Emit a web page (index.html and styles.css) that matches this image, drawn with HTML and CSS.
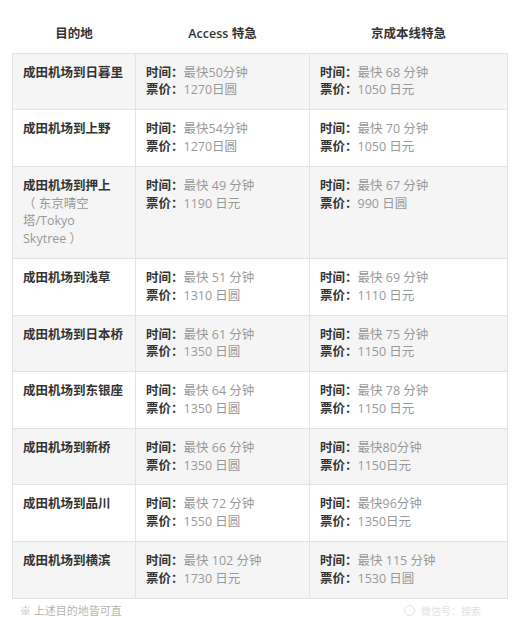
FILE: index.html
```html
<!DOCTYPE html>
<html lang="zh-CN">
<head>
<meta charset="utf-8">
<title>成田机场交通</title>
<link rel="stylesheet" href="styles.css">
</head>
<body>
<div class="page">
  <table class="fares">
    <colgroup>
      <col class="c1"><col class="c2"><col class="c3">
    </colgroup>
    <thead>
      <tr><th>目的地</th><th>Access 特急</th><th>京成本线特急</th></tr>
    </thead>
    <tbody>
      <tr>
        <td class="dest">成田机场到日暮里</td>
        <td><b>时间：</b><span class="v">最快50分钟</span><br><b>票价：</b><span class="v">1270日圆</span></td>
        <td><b>时间：</b><span class="v">最快 68 分钟</span><br><b>票价：</b><span class="v">1050 日元</span></td>
      </tr>
      <tr>
        <td class="dest">成田机场到上野</td>
        <td><b>时间：</b><span class="v">最快54分钟</span><br><b>票价：</b><span class="v">1270日圆</span></td>
        <td><b>时间：</b><span class="v">最快 70 分钟</span><br><b>票价：</b><span class="v">1050 日元</span></td>
      </tr>
      <tr>
        <td class="dest">成田机场到押上<br><span class="note">（ 东京晴空塔/Tokyo<br>Skytree ）</span></td>
        <td><b>时间：</b><span class="v">最快 49 分钟</span><br><b>票价：</b><span class="v">1190 日元</span></td>
        <td><b>时间：</b><span class="v">最快 67 分钟</span><br><b>票价：</b><span class="v">990 日圆</span></td>
      </tr>
      <tr>
        <td class="dest">成田机场到浅草</td>
        <td><b>时间：</b><span class="v">最快 51 分钟</span><br><b>票价：</b><span class="v">1310 日圆</span></td>
        <td><b>时间：</b><span class="v">最快 69 分钟</span><br><b>票价：</b><span class="v">1110 日元</span></td>
      </tr>
      <tr>
        <td class="dest">成田机场到日本桥</td>
        <td><b>时间：</b><span class="v">最快 61 分钟</span><br><b>票价：</b><span class="v">1350 日圆</span></td>
        <td><b>时间：</b><span class="v">最快 75 分钟</span><br><b>票价：</b><span class="v">1150 日元</span></td>
      </tr>
      <tr>
        <td class="dest">成田机场到东银座</td>
        <td><b>时间：</b><span class="v">最快 64 分钟</span><br><b>票价：</b><span class="v">1350 日圆</span></td>
        <td><b>时间：</b><span class="v">最快 78 分钟</span><br><b>票价：</b><span class="v">1150 日元</span></td>
      </tr>
      <tr>
        <td class="dest">成田机场到新桥</td>
        <td><b>时间：</b><span class="v">最快 66 分钟</span><br><b>票价：</b><span class="v">1350 日圆</span></td>
        <td><b>时间：</b><span class="v">最快80分钟</span><br><b>票价：</b><span class="v">1150日元</span></td>
      </tr>
      <tr>
        <td class="dest">成田机场到品川</td>
        <td><b>时间：</b><span class="v">最快 72 分钟</span><br><b>票价：</b><span class="v">1550 日圆</span></td>
        <td><b>时间：</b><span class="v">最快96分钟</span><br><b>票价：</b><span class="v">1350日元</span></td>
      </tr>
      <tr>
        <td class="dest">成田机场到横滨</td>
        <td><b>时间：</b><span class="v">最快 102 分钟</span><br><b>票价：</b><span class="v">1730 日元</span></td>
        <td><b>时间：</b><span class="v">最快 115 分钟</span><br><b>票价：</b><span class="v">1530 日圆</span></td>
      </tr>
    </tbody>
  </table>
  <div class="foot">
    <span class="footnote">※ 上述目的地皆可直</span>
    <span class="mark"><span class="dot"></span>微信号：搜索</span>
  </div>
</div>
</body>
</html>
```
FILE: styles.css
```css
html, body {
  margin: 0;
  padding: 0;
  background: #fff;
}
body {
  font-family: "Open Sans", "Noto Sans CJK SC", sans-serif;
  font-size: 12.5px;
  color: #333;
}
.page {
  padding: 15px 10px 0 12px;
}
.fares {
  width: 495px;
  border-collapse: collapse;
  table-layout: fixed;
}
.c1 { width: 123px; }
.c2 { width: 174px; }
.c3 { width: 198px; }
.fares th {
  font-weight: 600;
  color: #333;
  line-height: 17.6px;
  padding: 10px;
  text-align: center;
  border: none;
}
.fares td {
  border: 1px solid #e3e3e3;
  padding: 10px 9px 10px 10px;
  line-height: 17.8px;
  vertical-align: top;
  text-align: left;
}
.fares tbody tr:nth-child(odd) td {
  background: #f5f5f5;
}
.fares td b {
  font-weight: 700;
  color: #333;
}
.dest {
  font-weight: 700;
  color: #333;
}
.v, .note {
  color: #999;
  font-weight: 400;
}
.foot {
  display: flex;
  justify-content: space-between;
  align-items: flex-start;
  padding: 5px 26px 0 8px;
}
.footnote {
  font-size: 11px;
  line-height: 13px;
  color: #b5b5b5;
}
.mark {
  display: flex;
  align-items: center;
  gap: 6px;
  font-size: 10px;
  line-height: 12px;
  color: #e2e2e2;
  margin-top: 1px;
}
.dot {
  width: 9px;
  height: 9px;
  border: 1px solid #e2e2e2;
  border-radius: 50%;
}
```
